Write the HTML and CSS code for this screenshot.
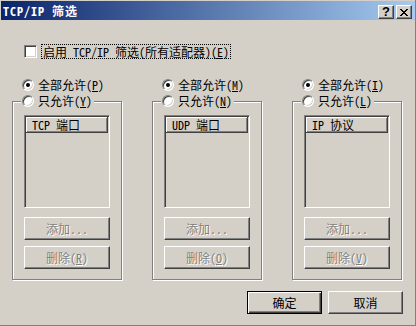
FILE: index.html
```html
<!DOCTYPE html>
<html lang="zh-CN">

<head>
    <meta charset="UTF-8">
    <title>TCP/IP 筛选</title>
    <link rel="stylesheet" href="styles.css">
</head>

<body>
    <div class="window">
        <div class="titlebar">
            <span class="title">TCP/IP 筛选</span>
            <div class="caption-buttons">
                <span class="cap-btn help">?</span>
                <span class="cap-btn">
                    <svg width="8" height="7" viewBox="0 0 8 7" shape-rendering="crispEdges">
                        <path fill="#000" d="M0 0h2v1H0zM6 0h2v1H6zM1 1h2v1H1zM5 1h2v1H5zM2 2h4v1H2zM3 3h2v1H3zM2 4h4v1H2zM1 5h2v1H1zM5 5h2v1H5zM0 6h2v1H0zM6 6h2v1H6z" />
                    </svg>
                </span>
            </div>
        </div>

        <div class="content">
            <div class="enable-row">
                <span class="checkbox"></span>
                <span class="focus-label">启用 TCP/IP 筛选(所有适配器)(<u>E</u>)</span>
            </div>

            <div class="columns">
                <div class="column">
                    <div class="radio-row"><span class="radio checked"></span><span>全部允许(<u>P</u>)</span></div>
                    <div class="group">
                        <div class="radio-row group-label"><span class="radio"></span><span>只允许(<u>Y</u>)</span></div>
                        <div class="listbox">
                            <div class="list-header">TCP 端口</div>
                        </div>
                        <div class="btn disabled add">添加...</div>
                        <div class="btn disabled remove">删除(<u>R</u>)</div>
                    </div>
                </div>
                <div class="column">
                    <div class="radio-row"><span class="radio checked"></span><span>全部允许(<u>M</u>)</span></div>
                    <div class="group">
                        <div class="radio-row group-label"><span class="radio"></span><span>只允许(<u>N</u>)</span></div>
                        <div class="listbox">
                            <div class="list-header">UDP 端口</div>
                        </div>
                        <div class="btn disabled add">添加...</div>
                        <div class="btn disabled remove">删除(<u>O</u>)</div>
                    </div>
                </div>
                <div class="column">
                    <div class="radio-row"><span class="radio checked"></span><span>全部允许(<u>I</u>)</span></div>
                    <div class="group">
                        <div class="radio-row group-label"><span class="radio"></span><span>只允许(<u>L</u>)</span></div>
                        <div class="listbox">
                            <div class="list-header">IP 协议</div>
                        </div>
                        <div class="btn disabled add">添加...</div>
                        <div class="btn disabled remove">删除(<u>V</u>)</div>
                    </div>
                </div>
            </div>

            <div class="footer">
                <div class="btn default">确定</div>
                <div class="btn">取消</div>
            </div>
        </div>
    </div>
</body>

</html>
```

FILE: styles.css
```css
* {
    box-sizing: border-box;
}

body {
    margin: 0;
    font-family: "Noto Sans CJK SC", sans-serif;
    font-size: 12px;
    font-feature-settings: "hwid";
    color: #000;
}

u {
    text-decoration: underline;
    text-underline-offset: 1px;
}

.window {
    width: 416px;
    height: 326px;
    padding: 1px 0 0 1px;
    background: #d4d0c8;
    border-right: 1px solid #808080;
    border-bottom: 1px solid #808080;
    overflow: hidden;
}

.titlebar {
    height: 19px;
    display: flex;
    align-items: flex-start;
    justify-content: space-between;
    padding: 0 3px 0 2px;
    background: linear-gradient(to right, #0a246a, #a6caf0);
}

.title {
    color: #fff;
    font-weight: bold;
    line-height: 19px;
    letter-spacing: 1px;
}

.caption-buttons {
    display: flex;
    gap: 2px;
    margin-top: 4px;
}

.cap-btn {
    width: 16px;
    height: 14px;
    display: flex;
    align-items: center;
    justify-content: center;
    background: #d4d0c8;
    border: 1px solid;
    border-color: #fff #404040 #404040 #fff;
    box-shadow: inset -1px -1px #808080;
}

.cap-btn.help {
    font-family: "Liberation Sans", sans-serif;
    font-weight: bold;
    font-size: 13px;
    line-height: 12px;
}

.content {
    padding: 0 12px 0 11px;
}

.enable-row {
    display: flex;
    align-items: center;
    gap: 4px;
    height: 15px;
    margin: 24px 0 0 12px;
}

.checkbox {
    width: 13px;
    height: 13px;
    background: #fff;
    border: 1px solid;
    border-color: #808080 #fff #fff #808080;
    box-shadow: inset 1px 1px #404040, inset -1px -1px #d4d0c8;
}

.focus-label {
    line-height: 13px;
    padding: 0 1px;
    border: 1px dotted #000;
}

.columns {
    display: flex;
    gap: 30px;
    margin-top: 20px;
}

.column {
    width: 110px;
}

.radio-row {
    display: flex;
    align-items: center;
    gap: 4px;
    height: 12px;
    line-height: 12px;
    margin-left: 10px;
}

.radio {
    position: relative;
    width: 12px;
    height: 12px;
    border-radius: 50%;
    background: #fff;
    border: 1px solid;
    border-color: #808080 #fff #fff #808080;
    box-shadow: inset 1px 1px #404040, inset -1px -1px #d4d0c8;
}

.radio.checked::after {
    content: "";
    position: absolute;
    left: 3px;
    top: 3px;
    width: 4px;
    height: 4px;
    border-radius: 50%;
    background: #000;
}

.group {
    display: flex;
    flex-direction: column;
    margin-top: 10px;
    padding: 0 11px 10px;
    border: 1px solid #808080;
    box-shadow: inset 1px 1px #fff, 1px 1px #fff;
}

.group-label {
    align-self: flex-start;
    margin: -7px 0 0 -3px;
    padding: 0 2px 0 1px;
    background: #d4d0c8;
}

.listbox {
    height: 93px;
    margin-top: 8px;
    border: 1px solid;
    border-color: #808080 #fff #fff #808080;
    box-shadow: inset 1px 1px #404040, inset -1px -1px #d4d0c8;
    padding: 1px 1px 0 1px;
}

.list-header {
    height: 16px;
    line-height: 15px;
    padding-left: 6px;
    border-right: 1px solid #404040;
    border-bottom: 1px solid #404040;
    box-shadow: inset 1px 1px #fff, inset -1px -1px #808080;
}

.btn {
    height: 23px;
    display: flex;
    align-items: center;
    justify-content: center;
    line-height: 13px;
    border: 1px solid;
    border-color: #fff #404040 #404040 #fff;
    box-shadow: inset -1px -1px #808080;
}

.btn.add {
    margin-top: 9px;
}

.btn.remove {
    margin-top: 6px;
}

.btn.disabled {
    color: #808080;
    text-shadow: 1px 1px #fff;
}

.footer {
    display: flex;
    justify-content: flex-end;
    gap: 6px;
    margin-top: 11px;
}

.footer .btn {
    width: 75px;
}

.footer .btn.default {
    border-color: #000;
    box-shadow: inset 1px 1px #fff, inset -1px -1px #404040, inset -2px -2px #808080;
}
```
